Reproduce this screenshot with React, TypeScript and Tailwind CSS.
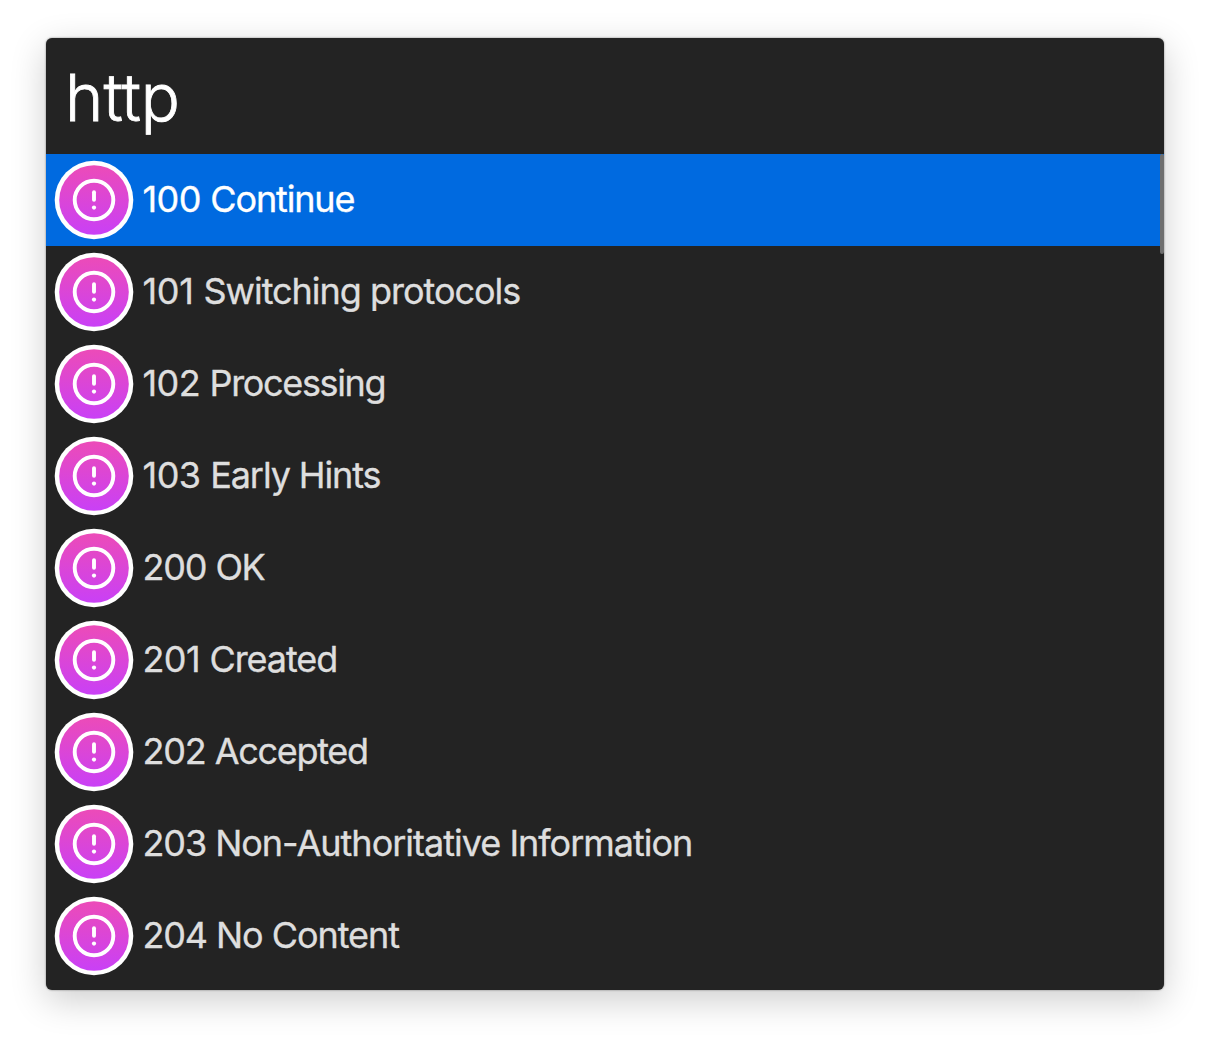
type Status = { code: string; label: string; codeTracking: string; tracking: string };

const statuses: Status[] = [
  { code: '100', label: 'Continue', codeTracking: 'tracking-[-0.6px]', tracking: 'tracking-[-1.15px]' },
  { code: '101', label: 'Switching protocols', codeTracking: 'tracking-[-0.3px]', tracking: 'tracking-[-1.02px]' },
  { code: '102', label: 'Processing', codeTracking: 'tracking-[-0.6px]', tracking: 'tracking-[-1.35px]' },
  { code: '103', label: 'Early Hints', codeTracking: 'tracking-[-0.5px]', tracking: 'tracking-[-1.1px]' },
  { code: '200', label: 'OK', codeTracking: 'tracking-[-1.15px]', tracking: 'tracking-[-1.5px]' },
  { code: '201', label: 'Created', codeTracking: 'tracking-[-0.6px]', tracking: 'tracking-[-1.1px]' },
  { code: '202', label: 'Accepted', codeTracking: 'tracking-[-1.15px]', tracking: 'tracking-[-1.3px]' },
  { code: '203', label: 'Non-Authoritative Information', codeTracking: 'tracking-[-1.1px]', tracking: 'tracking-[-1px]' },
  { code: '204', label: 'No Content', codeTracking: 'tracking-[-1.15px]', tracking: 'tracking-[-1.05px]' },
];

function StatusIcon() {
  return (
    <svg className="size-20 shrink-0" viewBox="0 0 80 80" fill="none" aria-hidden="true">
      <defs>
        <linearGradient id="badge" x1="0" y1="0" x2="0" y2="1">
          <stop offset="0" stopColor="#ec4bb8" />
          <stop offset="1" stopColor="#c940f6" />
        </linearGradient>
      </defs>
      <circle cx="40" cy="40" r="39.3" fill="#fff" />
      <circle cx="40" cy="40" r="34.8" fill="url(#badge)" />
      <circle cx="40" cy="40" r="19.3" stroke="#fff" strokeWidth="3.9" />
      <path d="M40 32.2V39.8" stroke="#fff" strokeWidth="3.9" strokeLinecap="round" />
      <circle cx="40" cy="47.6" r="2.1" fill="#fff" />
    </svg>
  );
}

export default function App() {
  return (
    <div className="h-[1044px] w-[1210px] overflow-hidden bg-white pl-[46px] pt-[38px] font-['Inter',sans-serif]">
      <main className="h-[952px] w-[1118px] overflow-hidden rounded-md bg-[#232323] shadow-[0_0_2px_rgba(0,0,0,0.5),0_10px_36px_rgba(0,0,0,0.2)]">
        <header className="flex h-[116px] items-center pl-[19px] pt-[3px]">
          <span className="text-[65px] font-light leading-[80px] tracking-[0.1px] text-white [-webkit-text-stroke:0.8px_white]">http</span>
        </header>
        <div className="relative">
          <ul>
            {statuses.map((s, i) => (
              <li
                key={s.code}
                className={`flex h-[92px] items-center pl-2 ${i === 0 ? 'bg-[#006ae0] text-white' : 'text-[#dedede]'}`}
              >
                <StatusIcon />
                <span className="mb-0.5 ml-[8.5px] whitespace-pre text-[36px] leading-[44px] [-webkit-text-stroke:0.35px_currentColor]">
                  <span className={s.codeTracking}>{s.code + ' '}</span>
                  <span className={s.tracking}>{s.label}</span>
                </span>
              </li>
            ))}
          </ul>
          <div className="absolute right-0 top-0 h-[100px] w-1 rounded-sm bg-[#6e6e6e]" />
        </div>
      </main>
    </div>
  );
}
